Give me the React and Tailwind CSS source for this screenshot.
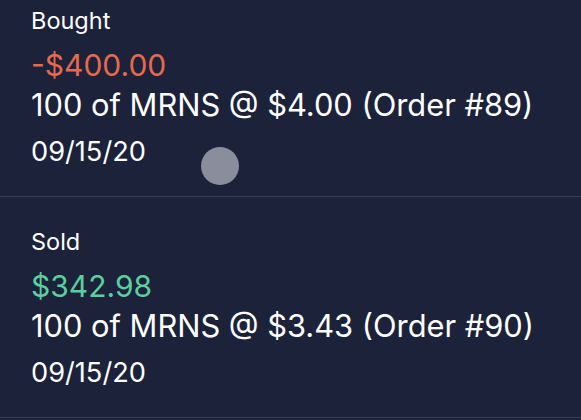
const trades = [
  {
    kind: "Bought",
    amount: "-$400.00",
    amountColor: "text-[#e8694b]",
    desc: "100 of MRNS @ $4.00 (Order #89)",
    date: "09/15/20",
  },
  {
    kind: "Sold",
    amount: "$342.98",
    amountColor: "text-[#5ccf9f]",
    desc: "100 of MRNS @ $3.43 (Order #90)",
    date: "09/15/20",
  },
];

function TradeRow({ t }) {
  return (
    <div className="border-b border-[#363e54] pl-[31px] pt-[32px] pb-[28px]">
      <div className="text-[23.5px] leading-[26px] text-white">{t.kind}</div>
      <div className={`mt-[13px] text-[30px] leading-[36px] ${t.amountColor}`}>
        {t.amount}
      </div>
      <div className="mt-[4px] text-[30.8px] leading-[36px] text-white whitespace-nowrap">
        {t.desc}
      </div>
      <div className="mt-[13px] text-[27.2px] leading-[32px] text-white">{t.date}</div>
    </div>
  );
}

export default function App() {
  return (
    <div
      className="relative h-[420px] w-[581px] overflow-hidden bg-[#1b2239]"
      style={{ fontFamily: "Inter, 'Liberation Sans', sans-serif" }}
    >
      {/* list scrolled a little */}
      <div className="-mt-[24px]">
        {trades.map((t) => (
          <TradeRow key={t.desc} t={t} />
        ))}
      </div>

      {/* touch indicator */}
      <div className="absolute left-[201px] top-[147px] h-[38px] w-[38px] rounded-full bg-[#8a8e9c]" />
    </div>
  );
}
